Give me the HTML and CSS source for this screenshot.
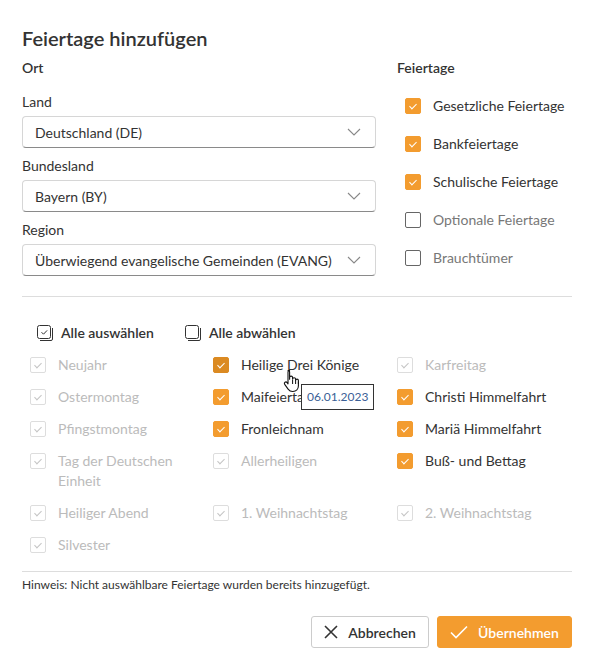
FILE: index.html
```html
<!DOCTYPE html>
<html lang="de">

<head>
  <meta charset="UTF-8">
  <meta name="viewport" content="width=device-width, initial-scale=1.0">
  <title>Feiertage hinzufügen</title>
  <link rel="stylesheet" href="styles.css">
</head>

<body>
  <div class="dialog">
    <h1 class="title">Feiertage hinzufügen</h1>

    <div class="top">
      <div class="place">
        <div class="section-label">Ort</div>

        <label class="field-label">Land</label>
        <div class="select">
          <span>Deutschland (DE)</span>
          <svg class="chevron" width="14" height="8" viewBox="0 0 14 8"><path d="M1 1l6 6 6-6" fill="none" stroke="#888" stroke-width="1.1"/></svg>
        </div>

        <label class="field-label">Bundesland</label>
        <div class="select">
          <span>Bayern (BY)</span>
          <svg class="chevron" width="14" height="8" viewBox="0 0 14 8"><path d="M1 1l6 6 6-6" fill="none" stroke="#888" stroke-width="1.1"/></svg>
        </div>

        <label class="field-label">Region</label>
        <div class="select">
          <span>Überwiegend evangelische Gemeinden (EVANG)</span>
          <svg class="chevron" width="14" height="8" viewBox="0 0 14 8"><path d="M1 1l6 6 6-6" fill="none" stroke="#888" stroke-width="1.1"/></svg>
        </div>
      </div>

      <div class="types">
        <div class="section-label">Feiertage</div>
        <div class="type-list">
          <div class="check-row"><span class="box checked"></span>Gesetzliche Feiertage</div>
          <div class="check-row"><span class="box checked"></span>Bankfeiertage</div>
          <div class="check-row"><span class="box checked"></span>Schulische Feiertage</div>
          <div class="check-row"><span class="box"></span>Optionale Feiertage</div>
          <div class="check-row"><span class="box"></span>Brauchtümer</div>
        </div>
      </div>
    </div>

    <hr class="divider">

    <div class="bulk">
      <div class="bulk-item">
        <svg width="17" height="17" viewBox="0 0 17 17">
          <rect x="0.5" y="0.5" width="13" height="13" rx="2" fill="none" stroke="#333"/>
          <path d="M15.5 3v11a1.5 1.5 0 0 1-1.5 1.5H3" fill="none" stroke="#333"/>
          <path d="M4.5 7.2l2 2 3.6-3.8" fill="none" stroke="#333"/>
        </svg>
        Alle auswählen
      </div>
      <div class="bulk-item">
        <svg width="17" height="17" viewBox="0 0 17 17">
          <rect x="0.5" y="0.5" width="13" height="13" rx="2" fill="none" stroke="#333"/>
          <path d="M15.5 3v11a1.5 1.5 0 0 1-1.5 1.5H3" fill="none" stroke="#333"/>
        </svg>
        Alle abwählen
      </div>
    </div>

    <div class="holidays">
      <div class="check-row disabled"><span class="box"></span>Neujahr</div>
      <div class="check-row hover"><span class="box checked"></span>Heilige Drei Könige</div>
      <div class="check-row disabled"><span class="box"></span>Karfreitag</div>

      <div class="check-row disabled"><span class="box"></span>Ostermontag</div>
      <div class="check-row"><span class="box checked"></span>Maifeiertag</div>
      <div class="check-row"><span class="box checked"></span>Christi Himmelfahrt</div>

      <div class="check-row disabled"><span class="box"></span>Pfingstmontag</div>
      <div class="check-row"><span class="box checked"></span>Fronleichnam</div>
      <div class="check-row"><span class="box checked"></span>Mariä Himmelfahrt</div>

      <div class="check-row disabled"><span class="box"></span><span class="wrap">Tag der Deutschen Einheit</span></div>
      <div class="check-row disabled"><span class="box"></span>Allerheiligen</div>
      <div class="check-row"><span class="box checked"></span>Buß- und Bettag</div>

      <div class="check-row disabled"><span class="box"></span>Heiliger Abend</div>
      <div class="check-row disabled"><span class="box"></span>1. Weihnachtstag</div>
      <div class="check-row disabled"><span class="box"></span>2. Weihnachtstag</div>

      <div class="check-row disabled"><span class="box"></span>Silvester</div>

      <!-- Tooltip + Mauszeiger über "Heilige Drei Könige" -->
      <div class="tooltip">06.01.2023</div>
      <svg class="cursor" width="18" height="24" viewBox="0 0 18 24">
        <path d="M5 1.5c.9 0 1.6.7 1.6 1.6v7.2V8.6c0-.9.7-1.5 1.5-1.5s1.5.6 1.5 1.5v1.6c0-.9.7-1.5 1.5-1.5s1.5.6 1.5 1.5v1.3c0-.8.6-1.4 1.4-1.4s1.4.6 1.4 1.4v5.3c0 3.3-2.3 5.7-5.5 5.7H9.6c-2 0-3.3-.8-4.5-2.4L1.7 15.4c-.5-.7-.4-1.6.3-2.1.7-.5 1.6-.3 2.1.3l.9 1.2V3.1c0-.9.7-1.6 1.6-1.6z" fill="#fff" stroke="#111" stroke-width="1.1" stroke-linejoin="round"/>
        <path d="M9.6 11v4M12.6 11.8v3.2M15.4 12.6v2.4" stroke="#111" stroke-width="1"/>
      </svg>
    </div>

    <hr class="divider bottom">

    <p class="hint">Hinweis: Nicht auswählbare Feiertage wurden bereits hinzugefügt.</p>

    <div class="actions">
      <button class="btn btn-cancel">
        <svg width="14" height="14" viewBox="0 0 14 14"><path d="M1 1l12 12M13 1L1 13" stroke="#333" stroke-width="1.6"/></svg>
        Abbrechen
      </button>
      <button class="btn btn-ok">
        <svg width="18" height="14" viewBox="0 0 18 14"><path d="M1 7.5l5 5L17 1.5" fill="none" stroke="#fff" stroke-width="1.6"/></svg>
        Übernehmen
      </button>
    </div>
  </div>
</body>

</html>
```

FILE: styles.css
```css
body {
  margin: 0;
  background: #fff;
  font-family: Lato, "Liberation Sans", sans-serif;
  font-size: 14px;
  color: #333;
}

.dialog {
  width: 550px;
  padding: 24px 22px 0 22px;
}

.title {
  margin: 0;
  font-size: 20px;
  line-height: 28px;
  font-weight: 600;
  color: #333;
}

.top {
  display: grid;
  grid-template-columns: 354px 1fr;
  column-gap: 21px;
  margin-top: 6px;
}

.section-label {
  font-weight: 600;
  line-height: 20px;
}

.field-label {
  display: block;
  line-height: 20px;
  margin-top: 8px;
}

.place .section-label + .field-label {
  margin-top: 14px;
}

.select {
  display: flex;
  align-items: center;
  justify-content: space-between;
  height: 32px;
  box-sizing: border-box;
  margin-top: 4px;
  padding: 0 14px 0 12px;
  border: 1px solid #d6d6d6;
  border-bottom-color: #8a8a8a;
  border-radius: 4px;
  white-space: nowrap;
}

.type-list {
  display: flex;
  flex-direction: column;
  gap: 18px;
  margin-top: 18px;
  padding-left: 8px;
  white-space: nowrap;
}

.check-row {
  display: flex;
  align-items: flex-start;
  gap: 12px;
  line-height: 20px;
}

.box {
  flex: none;
  width: 16px;
  height: 16px;
  margin-top: 2px;
  box-sizing: border-box;
  border: 1px solid #666;
  border-radius: 2px;
  position: relative;
}

.box.checked {
  background: #f39c2f;
  border-color: #f39c2f;
}

.box.checked::after,
.disabled .box::after {
  content: "";
  position: absolute;
  left: 4.5px;
  top: 3px;
  width: 3px;
  height: 6px;
  border: solid #fff;
  border-width: 0 1.5px 1.5px 0;
  transform: rotate(45deg);
}

.types .check-row:nth-child(n+4) {
  color: #777;
}

.hover .box.checked {
  background: #db8a22;
  border-color: #db8a22;
}

.disabled {
  color: #bbb;
}

.disabled .box {
  border-color: #ddd;
}

.disabled .box::after {
  border-color: #c4c4c4;
  border-width: 0 1px 1px 0;
}

.divider {
  margin: 20px 0 0 0;
  border: none;
  border-top: 1px solid #ddd;
}

.bulk {
  display: flex;
  gap: 31px;
  margin-top: 26px;
  padding-left: 15px;
  font-weight: 600;
  line-height: 20px;
}

.bulk-item {
  display: flex;
  align-items: center;
  gap: 7px;
}

.holidays {
  position: relative;
  display: grid;
  grid-template-columns: 183px 184px 1fr;
  row-gap: 12px;
  margin-top: 12px;
  padding-left: 8px;
}

.holidays .check-row {
  white-space: nowrap;
}

.holidays .wrap {
  white-space: normal;
  width: 130px;
}

.tooltip {
  position: absolute;
  left: 279px;
  top: 29px;
  padding: 3px 5px;
  font-size: 12px;
  line-height: 18px;
  color: #3b5f96;
  background: #fff;
  border: 1px solid #333;
}

.cursor {
  position: absolute;
  left: 261px;
  top: 14px;
}

.divider.bottom {
  margin-top: 16px;
}

.hint {
  margin: 5px 0 0 0;
  font-size: 12px;
  line-height: 16px;
}

.actions {
  display: flex;
  justify-content: flex-end;
  gap: 8px;
  margin-top: 23px;
}

.btn {
  display: flex;
  align-items: center;
  gap: 10px;
  height: 32px;
  padding: 0 12px;
  border-radius: 3px;
  font-family: inherit;
  font-size: 14px;
  font-weight: 600;
  cursor: pointer;
}

.btn-cancel {
  width: 118px;
  justify-content: center;
  background: #fff;
  color: #333;
  border: 1px solid #ccc;
}

.btn-ok {
  width: 135px;
  justify-content: center;
  background: #f39c2f;
  color: #fff;
  border: 1px solid #f39c2f;
}
```
